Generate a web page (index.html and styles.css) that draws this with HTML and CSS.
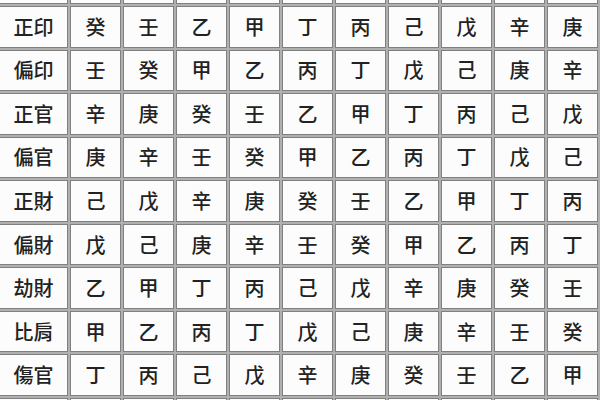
FILE: index.html
```html
<!DOCTYPE html>
<html lang="zh-Hant">
<head>
<meta charset="utf-8">
<title>十神表</title>
<link rel="stylesheet" href="styles.css">
</head>
<body>
<div class="viewport">
  <div class="grid">
    <div class="cell edge"></div><div class="cell edge"></div><div class="cell edge"></div><div class="cell edge"></div><div class="cell edge"></div><div class="cell edge"></div><div class="cell edge"></div><div class="cell edge"></div><div class="cell edge"></div><div class="cell edge"></div><div class="cell edge"></div>
    <div class="cell label">正印</div><div class="cell">癸</div><div class="cell">壬</div><div class="cell">乙</div><div class="cell">甲</div><div class="cell">丁</div><div class="cell">丙</div><div class="cell">己</div><div class="cell">戊</div><div class="cell">辛</div><div class="cell">庚</div>
    <div class="cell label">偏印</div><div class="cell">壬</div><div class="cell">癸</div><div class="cell">甲</div><div class="cell">乙</div><div class="cell">丙</div><div class="cell">丁</div><div class="cell">戊</div><div class="cell">己</div><div class="cell">庚</div><div class="cell">辛</div>
    <div class="cell label">正官</div><div class="cell">辛</div><div class="cell">庚</div><div class="cell">癸</div><div class="cell">壬</div><div class="cell">乙</div><div class="cell">甲</div><div class="cell">丁</div><div class="cell">丙</div><div class="cell">己</div><div class="cell">戊</div>
    <div class="cell label">偏官</div><div class="cell">庚</div><div class="cell">辛</div><div class="cell">壬</div><div class="cell">癸</div><div class="cell">甲</div><div class="cell">乙</div><div class="cell">丙</div><div class="cell">丁</div><div class="cell">戊</div><div class="cell">己</div>
    <div class="cell label">正財</div><div class="cell">己</div><div class="cell">戊</div><div class="cell">辛</div><div class="cell">庚</div><div class="cell">癸</div><div class="cell">壬</div><div class="cell">乙</div><div class="cell">甲</div><div class="cell">丁</div><div class="cell">丙</div>
    <div class="cell label">偏財</div><div class="cell">戊</div><div class="cell">己</div><div class="cell">庚</div><div class="cell">辛</div><div class="cell">壬</div><div class="cell">癸</div><div class="cell">甲</div><div class="cell">乙</div><div class="cell">丙</div><div class="cell">丁</div>
    <div class="cell label">劫財</div><div class="cell">乙</div><div class="cell">甲</div><div class="cell">丁</div><div class="cell">丙</div><div class="cell">己</div><div class="cell">戊</div><div class="cell">辛</div><div class="cell">庚</div><div class="cell">癸</div><div class="cell">壬</div>
    <div class="cell label">比肩</div><div class="cell">甲</div><div class="cell">乙</div><div class="cell">丙</div><div class="cell">丁</div><div class="cell">戊</div><div class="cell">己</div><div class="cell">庚</div><div class="cell">辛</div><div class="cell">壬</div><div class="cell">癸</div>
    <div class="cell label">傷官</div><div class="cell">丁</div><div class="cell">丙</div><div class="cell">己</div><div class="cell">戊</div><div class="cell">辛</div><div class="cell">庚</div><div class="cell">癸</div><div class="cell">壬</div><div class="cell">乙</div><div class="cell">甲</div>
    <div class="cell edge"></div><div class="cell edge"></div><div class="cell edge"></div><div class="cell edge"></div><div class="cell edge"></div><div class="cell edge"></div><div class="cell edge"></div><div class="cell edge"></div><div class="cell edge"></div><div class="cell edge"></div><div class="cell edge"></div>
  </div>
</div>
</body>
</html>
```

FILE: styles.css
```css
html, body {
  margin: 0;
  padding: 0;
  background: #ffffff;
}
.viewport {
  width: 600px;
  height: 400px;
  overflow: hidden;
}
.grid {
  display: grid;
  grid-template-columns: 69px repeat(10, 51px);
  grid-auto-rows: 41.56px;
  gap: 2px;
  background: #b0b0b0;
  padding: 0 2px 2px 0;
  width: max-content;
  margin: -37.5px 0 0 -1px;
  font-family: "Noto Sans CJK TC", "Noto Sans CJK SC", sans-serif;
  font-size: 20px;
  font-weight: 500;
  color: #222222;
}
.cell {
  box-sizing: border-box;
  border: 1px solid #808080;
  background: #fcfcfc;
  display: flex;
  align-items: center;
  justify-content: center;
  line-height: 1;
}
```
